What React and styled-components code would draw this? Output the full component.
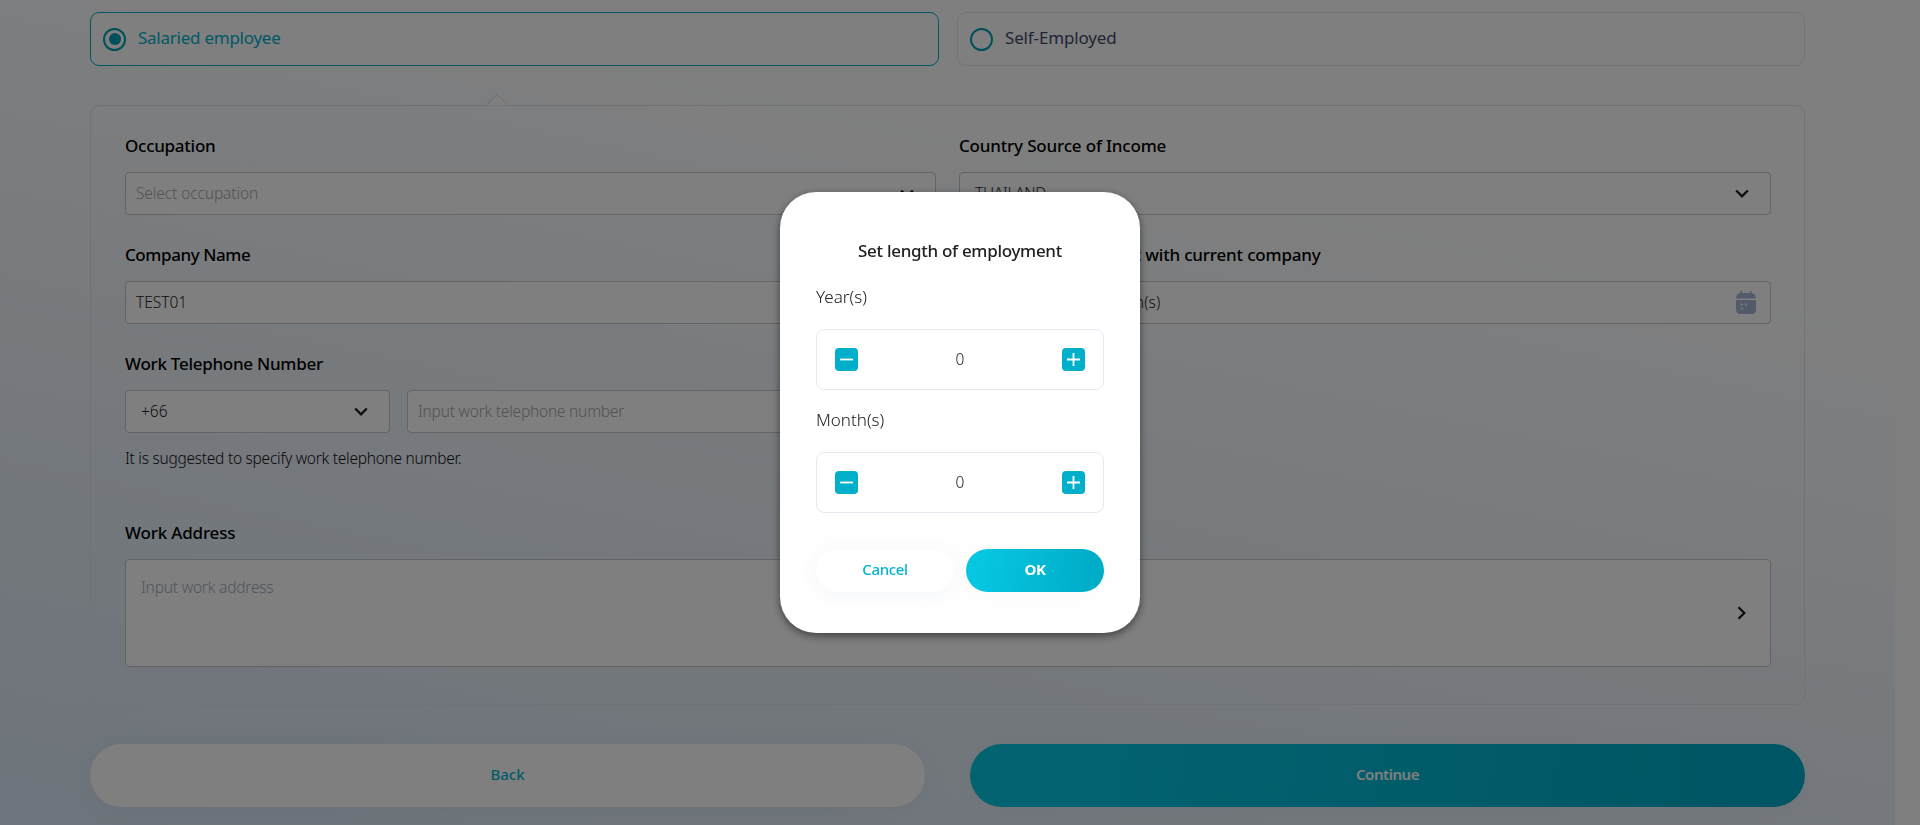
import React from "react";
import styled, { createGlobalStyle, css } from "styled-components";

const Global = createGlobalStyle`
  * { box-sizing: border-box; }
  body { margin: 0; font-family: "Noto Sans", sans-serif; overflow: hidden; }
  button { font-family: inherit; border: 0; padding: 0; }
`;

const Screen = styled.div`
  display: flex;
  height: 825px;
  background: #fdfdfd;
`;

const Page = styled.main`
  width: 1895px;
  padding: 12px 90px 0;
  background: linear-gradient(192deg, #ffffff 24%, #dae8f6 100%);
`;

const Options = styled.div`
  display: grid;
  grid-template-columns: 849px 848px;
  gap: 18px;
`;

const Option = styled.div`
  display: flex;
  align-items: center;
  height: 54px;
  padding-left: 12px;
  gap: 12px;
  border: 1px solid ${(p) => (p.$active ? "#00b0ca" : "#e6e8f0")};
  border-radius: 9px;
  background: #fff;
  color: ${(p) => (p.$active ? "#00b0ca" : "#414a6b")};
`;

const Radio = styled.span`
  display: grid;
  place-items: center;
  width: 23px;
  height: 23px;
  border: 2px solid #00a0b8;
  border-radius: 50%;
  &::after {
    content: "";
    width: 12px;
    height: 12px;
    border-radius: 50%;
    background: ${(p) => (p.$active ? "#00a0b8" : "transparent")};
  }
`;

const Text = styled.span`
  display: block;
  white-space: nowrap;
  font-size: ${(p) => p.$size || 16}px;
  font-weight: ${(p) => p.$weight || 400};
  letter-spacing: ${(p) => p.$track || 0}px;
  line-height: 24px;
`;

const OptionText = styled(Text).attrs({ $size: 17 })`
  margin-bottom: 2px;
`;

const Value = styled(Text).attrs({ $size: 15.5, $weight: 300 })`
  margin-bottom: 2px;
  word-spacing: ${(p) => p.$words || 0}px;
`;

const ButtonText = styled(Text)`
  margin-bottom: 3px;
`;

const Panel = styled.section`
  position: relative;
  margin-top: 39px;
  height: 600px;
  padding: 27px 33px 0 34px;
  border: 1px solid #e3e4e8;
  border-radius: 9px;
`;

const Pointer = styled.i`
  position: absolute;
  left: 398px;
  top: -9px;
  width: 16px;
  height: 16px;
  border: 1px solid #e3e4e8;
  border-right-color: transparent;
  border-bottom-color: transparent;
  background: linear-gradient(135deg, #fefefe 50%, transparent 50%);
  transform: rotate(45deg);
`;

const Row = styled.div`
  display: grid;
  grid-template-columns: 811px 812px;
  column-gap: 23px;
  height: 109px;
`;

const Label = styled(Text).attrs({ $size: 17, $weight: 480 })`
  color: #000;
  height: 39px;
  padding-top: 1px;
`;

const Field = styled.div`
  display: flex;
  align-items: ${(p) => (p.$tall ? "flex-start" : "center")};
  justify-content: space-between;
  height: ${(p) => (p.$tall ? 108 : 43)}px;
  padding: ${(p) => (p.$tall ? "15px" : "0")} ${(p) => p.$right || 21}px 0 ${(p) => p.$left || 10}px;
  border: 1px solid #c6c8cc;
  border-radius: 4px;
  background: #fff;
  color: ${(p) => p.$color || "#242428"};
`;

const Phone = styled.div`
  display: grid;
  grid-template-columns: 265px 529px;
  gap: 17px;
`;

const Hint = styled.div`
  margin-top: 13px;
  color: #111;
`;

const Address = styled.div`
  margin-top: 50px;
`;

const ChevronBox = styled.span`
  display: flex;
  align-self: center;
  ${(p) => p.$side && css`margin-top: -16px; transform: rotate(-90deg);`}
`;

const Actions = styled.div`
  display: grid;
  grid-template-columns: ${(p) => p.$cols};
  gap: ${(p) => p.$gap}px;
  margin-top: ${(p) => p.$top}px;
`;

const Button = styled.button`
  display: flex;
  align-items: center;
  justify-content: center;
  height: ${(p) => p.$height}px;
  border-radius: 32px;
  color: ${(p) => (p.$primary ? "#fff" : "#00b5d0")};
  background: ${(p) => (p.$primary ? "linear-gradient(100deg, #06c6e2 12%, #00adc8 88%)" : "#fff")};
  box-shadow: 0 2px 24px ${(p) => (p.$primary ? "rgba(40,60,120,.03)" : "rgba(40,60,120,.06)")};
`;

const Overlay = styled.div`
  position: fixed;
  inset: 0;
  display: flex;
  align-items: center;
  justify-content: center;
  background: rgba(0, 0, 0, 0.5);
`;

const Modal = styled.div`
  width: 360px;
  height: 441px;
  padding: 47px 36px 0;
  border-radius: 36px;
  background: #fff;
  color: #212121;
  box-shadow: 0 3px 8px rgba(0, 0, 0, 0.5);
`;

const Title = styled(Text).attrs({ $size: 17, $weight: 500, $track: -0.3 })`
  text-align: center;
`;

const Unit = styled(Text).attrs({ $size: 17, $weight: 350 })`
  margin-top: ${(p) => p.$top}px;
`;

const Stepper = styled.div`
  display: flex;
  align-items: center;
  justify-content: space-between;
  height: 61px;
  margin-top: ${(p) => p.$top}px;
  padding: 0 18px;
  border: 1px solid #e6e8f1;
  border-radius: 8px;
`;

const Step = styled.button`
  display: grid;
  place-items: center;
  width: 23px;
  height: 23px;
  border-radius: 4px;
  background: #00afca;
`;

const Chevron = ({ side }) => (
  <ChevronBox $side={side}>
    <svg width="14" height="10" viewBox="0 0 14 10" fill="none" stroke="#1b1b1b" strokeWidth="2.3">
      <path d="M1.2 1.5 7 7.3 12.8 1.5" />
    </svg>
  </ChevronBox>
);

const Calendar = () => (
  <svg width="20" height="23" viewBox="0 0 20 23" fill="#a6b5d2">
    <path d="M4.5 0H6v2h8V0h1.5v2c2.7.3 4.3 2 4.5 5.500H0C.2 4 1.800 2.300 4.500 2z" />
    <path d="M0 9h20v9.500q0 4.500-4.500 4.500h-11Q0 23 0 18.500z" />
    <path d="M4.800 12.500h2v2h-2zM8.800 12.500h2v2h-2zM4.800 16.500h2v2h-2z" fill="#f1f4f9" />
  </svg>
);

const Counter = ({ top, value }) => (
  <Stepper $top={top}>
    <Step aria-label="Decrease">
      <svg width="13" height="13" stroke="#fff" strokeWidth="1.8"><path d="M0 6.500h13" /></svg>
    </Step>
    <Value>{value}</Value>
    <Step aria-label="Increase">
      <svg width="13" height="13" stroke="#fff" strokeWidth="1.8"><path d="M0 6.500h13M6.500 0v13" /></svg>
    </Step>
  </Stepper>
);

export default function App() {
  return (
    <>
      <Global />
      <Screen>
        <Page>
          <Options>
            <Option $active><Radio $active /><OptionText $track={-0.25}>Salaried employee</OptionText></Option>
            <Option><Radio /><OptionText $track={-0.15}>Self-Employed</OptionText></Option>
          </Options>
          <Panel>
            <Pointer />
            <Row>
              <div>
                <Label $track={-0.27}>Occupation</Label>
                <Field $color="#a6a6a6"><Value $track={-0.1}>Select occupation</Value><Chevron /></Field>
              </div>
              <div>
                <Label $track={-0.18}>Country Source of Income</Label>
                <Field $left={15}><Value $track={-0.3}>THAILAND</Value><Chevron /></Field>
              </div>
            </Row>
            <Row>
              <div>
                <Label $track={-0.42}>Company Name</Label>
                <Field><Value>TEST01</Value></Field>
              </div>
              <div>
                <Label $track={-0.18}>Length of employment with current company</Label>
                <Field $left={15} $right={14}><Value $track={0.1} $words={3.4}>0 Year(s) and 0 Month(s)</Value><Calendar /></Field>
              </div>
            </Row>
            <div>
              <Label $track={-0.27}>Work Telephone Number</Label>
              <Phone>
                <Field $left={15}><Value>+66</Value><Chevron /></Field>
                <Field $color="#a6a6a6"><Value $track={-0.22}>Input work telephone number</Value></Field>
              </Phone>
              <Hint><Value $track={-0.26}>It is suggested to specify work telephone number.</Value></Hint>
            </div>
            <Address>
              <Label $track={-0.18}>Work Address</Label>
              <Field $tall $left={15} $color="#a0abc0"><Value $track={-0.2}>Input work address</Value><Chevron side /></Field>
            </Address>
          </Panel>
          <Actions $cols="835px 835px" $gap={45} $top={39}>
            <Button $height={63}><ButtonText $size={15} $weight={500}>Back</ButtonText></Button>
            <Button $height={63} $primary><ButtonText $size={15} $weight={600} $track={-0.45}>Continue</ButtonText></Button>
          </Actions>
        </Page>
      </Screen>
      <Overlay>
        <Modal role="dialog">
          <Title>Set length of employment</Title>
          <Unit $top={22}>Year(s)</Unit>
          <Counter top={20} value={0} />
          <Unit $top={18}>Month(s)</Unit>
          <Counter top={20} value={0} />
          <Actions $cols="138px 138px" $gap={12} $top={36}>
            <Button $height={43}><ButtonText $size={15} $weight={500} $track={-0.35}>Cancel</ButtonText></Button>
            <Button $height={43} $primary><ButtonText $size={15} $weight={700} $track={-0.3}>OK</ButtonText></Button>
          </Actions>
        </Modal>
      </Overlay>
    </>
  );
}
